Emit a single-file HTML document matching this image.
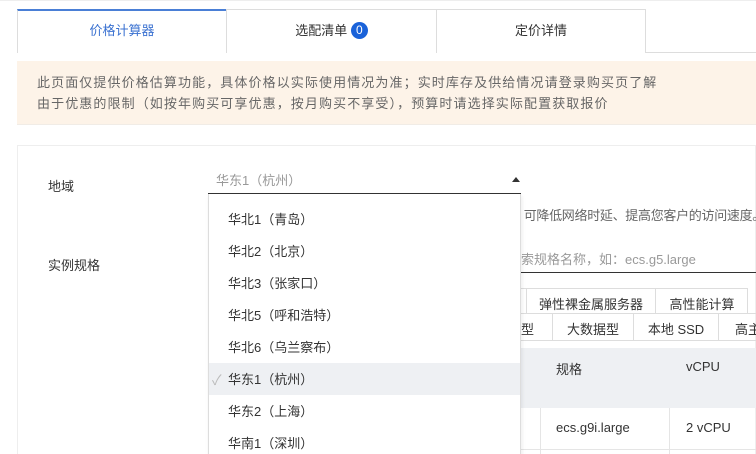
<!DOCTYPE html>
<html><head><meta charset="utf-8"><style>
*{margin:0;padding:0;box-sizing:border-box}
html,body{width:756px;height:454px;overflow:hidden}
body{background:#fff;font-family:"Liberation Sans","Noto Sans CJK SC",sans-serif;font-size:13px;color:#333;position:relative}
.a{position:absolute;white-space:nowrap}
.tab{position:absolute;top:9px;height:44px;border:1px solid #ddd;border-bottom:none;background:#fff;text-align:center;line-height:42px;font-size:13px;color:#333}
</style></head><body>
<div class="a" style="left:0;top:0;width:756px;height:1px;background:#eee"></div>
<div class="a" style="left:17px;top:52px;width:739px;height:1px;background:#ddd"></div>
<div class="tab" style="left:17px;width:210px;border-top:2px solid #4a7fd6;color:#3b72d1;line-height:40px">价格计算器</div>
<div class="tab" style="left:226px;width:211px">选配清单 <span style="display:inline-block;width:17px;height:17px;border-radius:50%;background:#1a62d9;color:#fff;font-size:12px;line-height:17px;vertical-align:1px">0</span></div>
<div class="tab" style="left:436px;width:210px">定价详情</div>
<div class="a" style="left:17px;top:61px;width:739px;height:64px;background:#fdf3e8;border-bottom:1px solid #f1ece6"></div>
<div class="a" style="left:37px;top:72px;color:#666;line-height:21px;letter-spacing:1.1px">此页面仅提供价格估算功能，具体价格以实际使用情况为准；实时库存及供给情况请登录购买页了解<br>由于优惠的限制（如按年购买可享优惠，按月购买不享受），预算时请选择实际配置获取报价</div>
<div class="a" style="left:17px;top:145px;width:739px;height:320px;border:1px solid #eee"></div>
<div class="a" style="left:48px;top:176px">地域</div>
<div class="a" style="left:48px;top:255px">实例规格</div>
<div class="a" style="left:216px;top:170px;color:#999">华东1（杭州）</div>
<div class="a" style="left:512px;top:177px;width:0;height:0;border-left:4px solid transparent;border-right:4px solid transparent;border-bottom:5px solid #333"></div>
<div class="a" style="left:208px;top:193px;width:313px;height:1px;background:#333"></div>
<div class="a" style="left:511px;top:205px;color:#666;letter-spacing:-0.3px">，可降低网络时延、提高您客户的访问速度。</div>
<div class="a" style="left:508px;top:249px;color:#999">搜索规格名称，如：ecs.g5.large</div>
<div class="a" style="left:521px;top:272px;width:235px;height:1px;background:#333"></div>
<div class="a" style="left:521px;top:288px;width:227px;height:26px;border:1px solid #ddd;border-left:none;border-bottom:none"></div>
<div class="a" style="left:526px;top:288px;width:1px;height:26px;background:#ddd"></div>
<div class="a" style="left:655px;top:288px;width:1px;height:26px;background:#ddd"></div>
<div class="a" style="left:527px;top:294px;width:128px;text-align:center">弹性裸金属服务器</div>
<div class="a" style="left:656px;top:294px;width:92px;text-align:center">高性能计算</div>
<div class="a" style="left:521px;top:313px;width:235px;height:28px;border-top:1px solid #ddd;border-bottom:1px solid #ddd"></div>
<div class="a" style="left:552px;top:313px;width:1px;height:28px;background:#ddd"></div>
<div class="a" style="left:633px;top:313px;width:1px;height:28px;background:#ddd"></div>
<div class="a" style="left:718px;top:313px;width:1px;height:28px;background:#ddd"></div>
<div class="a" style="left:521px;top:319px">型</div>
<div class="a" style="left:553px;top:319px;width:80px;text-align:center">大数据型</div>
<div class="a" style="left:634px;top:319px;width:84px;text-align:center">本地 SSD</div>
<div class="a" style="left:735px;top:319px">高主</div>
<div class="a" style="left:521px;top:348px;width:235px;height:60px;background:#eef0f3"></div>
<div class="a" style="left:556px;top:359px">规格</div>
<div class="a" style="left:686px;top:359px">vCPU</div>
<div class="a" style="left:540px;top:408px;width:1px;height:46px;background:#e5e5e5"></div>
<div class="a" style="left:669px;top:408px;width:1px;height:46px;background:#e5e5e5"></div>
<div class="a" style="left:521px;top:449px;width:235px;height:1px;background:#e5e5e5"></div>
<div class="a" style="left:556px;top:420px">ecs.g9i.large</div>
<div class="a" style="left:686px;top:420px">2 vCPU</div>
<div class="a" style="left:208px;top:194px;width:313px;height:270px;background:#fff;border:1px solid #ddd;border-top:none;box-shadow:1px 2px 4px rgba(0,0,0,.08)"></div>
<div class="a" style="left:209px;top:363px;width:311px;height:32px;background:#eef0f3"></div>
<div class="a" style="left:212px;top:370px;color:#bbb;font-size:14px">✓</div>
<div class="a" style="left:228px;top:204px;line-height:32px;color:#333">华北1（青岛）<br>华北2（北京）<br>华北3（张家口）<br>华北5（呼和浩特）<br>华北6（乌兰察布）<br>华东1（杭州）<br>华东2（上海）<br>华南1（深圳）</div>
</body></html>
